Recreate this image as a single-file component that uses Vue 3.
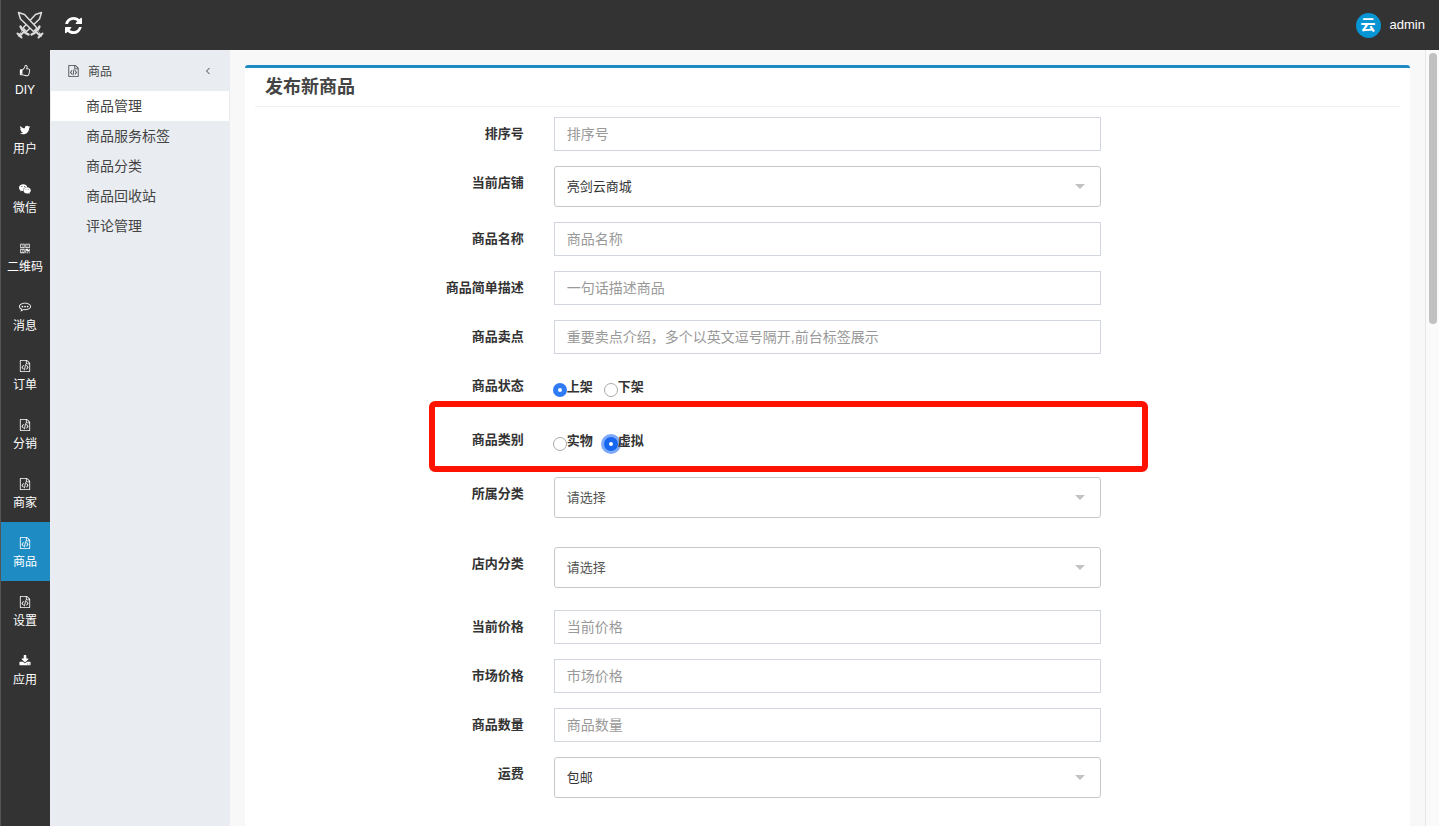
<script setup>
import { ref, reactive } from 'vue'

const icons = {
  thumb: 'M384 1344q0-26-19-45t-45-19-45 19-19 45 19 45 45 19 45-19 19-45zm1152-576q0-51-39-89.5t-89-38.5h-352q0-58 48-159.5t48-160.5q0-98-32-145t-128-47q-26 26-38 85t-30.5 125.5-59.5 109.5q-22 23-77 91-4 5-23 30t-31.5 41-34.5 42.5-40 44-38.5 35.5-40 27-35.5 9h-32v640h32q13 0 31.5 3t33 6.5 38 11 35 11.5 35.5 12.5 29 10.5q211 73 342 73h121q192 0 192-167 0-26-5-56 30-16 47.5-52.5t17.5-73.5-18-69q53-50 53-119 0-25-10-55.5t-25-47.5q32-1 53.5-47t21.5-81zm128-1q0 89-49 163 9 33 9 69 0 77-38 144 3 21 3 43 0 101-60 178 1 139-85 219.5t-227 80.5h-129q-96 0-189.5-22.5t-216.5-65.5q-116-40-138-40h-288q-53 0-90.5-37.5t-37.5-90.5v-640q0-53 37.5-90.5t90.5-37.5h274q36-24 137-155 58-75 107-128 24-25 35.5-85.5t30.5-126.5 62-108q39-37 90-37 84 0 151 32.5t102 101.5 35 186q0 93-48 192h176q104 0 180 76t76 179z',
  twitter: 'M1684 408q-67 98-162 167 1 14 1 42 0 130-38 259.5t-115.5 248.5-184.5 210.5-258 146-323 54.5q-271 0-496-145 35 4 78 4 225 0 401-138-105-2-188-64.5t-114-159.5q33 5 61 5 43 0 85-11-112-23-185.5-111.5t-73.5-205.5v-4q68 38 146 41-66-44-105-115t-39-154q0-88 44-163 121 149 294.5 238.5t371.5 99.5q-8-38-8-74 0-134 94.5-228.5t228.5-94.5q140 0 236 102 109-21 205-78-37 115-142 178 93-10 186-50z',
  wechat: 'M640 190C290 190 0 410 0 700c0 165 92 305 240 400l-60 185 215-115c80 22 150 32 235 32-10-40-16-80-16-120 0-280 250-500 560-500l50 3C1170 350 930 190 640 190zM420 440a80 80 0 1 1 0 160 80 80 0 0 1 0-160zm440 0a80 80 0 1 1 0 160 80 80 0 0 1 0-160zM1220 650c-310 0-550 205-550 455s240 455 550 455c65 0 130-12 190-30l180 95-48-155c130-90 220-215 220-365 0-250-240-455-542-455zm-180 240a65 65 0 1 1 0 130 65 65 0 0 1 0-130zm360 0a65 65 0 1 1 0 130 65 65 0 0 1 0-130z',
  qrcode: 'M192 256h640v640H192zm128 128v384h384V384zM448 512h128v128H448zM960 256h640v640H960zm128 128v384h384V384zM1216 512h128v128h-128zM192 1024h640v640H192zm128 128v384h384v-384zM448 1280h128v128H448zM960 1024h384v128h128v-128h128v384h-384v-128h-128v384H960zM1216 1536h128v128h-128zM1472 1536h128v128h-128z',
  comment: 'M896 256C400 256 0 510 0 832c0 190 140 355 350 458-30 110-90 200-180 280 190-20 370-90 500-218 70 10 150 16 226 16 496 0 896-218 896-536S1392 256 896 256zm0 128c425 0 768 200 768 448s-343 416-768 416c-90 0-180-10-270-25-55 55-115 100-180 130 25-45 45-90 58-145C270 1120 128 985 128 832c0-248 343-448 768-448zM512 704a128 128 0 1 0 0 256 128 128 0 0 0 0-256zm384 0a128 128 0 1 0 0 256 128 128 0 0 0 0-256zm384 0a128 128 0 1 0 0 256 128 128 0 0 0 0-256z',
  file: 'M1596 380q28 28 48 76t20 88v1152q0 40-28 68t-68 28h-1344q-40 0-68-28t-28-68v-1600q0-40 28-68t68-28h896q40 0 88 20t76 48zm-444-244v376h376q-10-29-22-41l-313-313q-12-12-41-22zm384 1528v-1024h-416q-40 0-68-28t-28-68v-416h-768v1536h1280zm-928-896q8-11 21-12.5t24 6.5l51 38q11 8 12.5 21t-6.5 24l-182 243 182 243q8 11 6.5 24t-12.5 21l-51 38q-11 8-24 6.5t-21-12.5l-226-301q-14-19 0-38zm802 301q14 19 0 38l-226 301q-8 11-21 12.5t-24-6.5l-51-38q-11-8-12.5-21t6.5-24l182-243-182-243q-8-11-6.5-24t12.5-21l51-38q11-8 24-6.5t21 12.5zm-620 461q-13-2-20.5-13t-5.5-24l138-831q2-13 13-20.5t24-5.5l63 10q13 2 20.5 13t5.5 24l-138 831q-2 13-13 20.5t-24 5.5z',
  download: 'M1344 1344q0-26-19-45t-45-19-45 19-19 45 19 45 45 19 45-19 19-45zm256 0q0-26-19-45t-45-19-45 19-19 45 19 45 45 19 45-19 19-45zm128-224v320q0 40-28 68t-68 28h-1472q-40 0-68-28t-28-68v-320q0-40 28-68t68-28h465l135 136q58 56 136 56t136-56l136-136h464q40 0 68 28t28 68zm-325-569q17 41-14 70l-448 448q-18 19-45 19t-45-19l-448-448q-31-29-14-70 17-39 59-39h256v-448q0-26 19-45t45-19h256q26 0 45 19t19 45v448h256q42 0 59 39z',
  refresh: 'M1639 1056q0 5-1 7-64 268-268 434.5t-478 166.5q-146 0-282.5-55t-243.5-157l-129 129q-19 19-45 19t-45-19-19-45v-448q0-26 19-45t45-19h448q26 0 45 19t19 45-19 45l-137 137q71 66 161 102t187 36q134 0 250-65t186-179q11-17 53-117 8-23 30-23h192q13 0 22.5 9.5t9.5 22.5zm25-800v448q0 26-19 45t-45 19h-448q-26 0-45-19t-19-45 19-45l138-138q-148-137-349-137-134 0-250 65t-186 179q-11 17-53 117-8 23-30 23h-199q-13 0-22.5-9.5t-9.5-22.5v-7q65-268 270-434.5t480-166.5q146 0 284 55.5t245 156.5l130-129q19-19 45-19t45 19 19 45z'
}

const modules = [
  { label: 'DIY', icon: 'thumb' },
  { label: '用户', icon: 'twitter' },
  { label: '微信', icon: 'wechat' },
  { label: '二维码', icon: 'qrcode' },
  { label: '消息', icon: 'comment' },
  { label: '订单', icon: 'file' },
  { label: '分销', icon: 'file' },
  { label: '商家', icon: 'file' },
  { label: '商品', icon: 'file', active: true },
  { label: '设置', icon: 'file' },
  { label: '应用', icon: 'download' }
]

const menu = ['商品管理', '商品服务标签', '商品分类', '商品回收站', '评论管理']
const current = ref('商品管理')

const fields = [
  { id: 'sort', label: '排序号', type: 'text', hint: '排序号' },
  { id: 'shop', label: '当前店铺', type: 'select', options: ['亮剑云商城'] },
  { id: 'name', label: '商品名称', type: 'text', hint: '商品名称' },
  { id: 'summary', label: '商品简单描述', type: 'text', hint: '一句话描述商品' },
  { id: 'points', label: '商品卖点', type: 'text', hint: '重要卖点介绍，多个以英文逗号隔开,前台标签展示' },
  { id: 'status', label: '商品状态', type: 'radio', options: ['上架', '下架'] },
  { id: 'kind', label: '商品类别', type: 'radio', options: ['实物', '虚拟'], marked: true },
  { id: 'category', label: '所属分类', type: 'select', options: ['请选择'], muted: true, gap: 'wide' },
  { id: 'shopCategory', label: '店内分类', type: 'select', options: ['请选择'], muted: true, gap: 'medium' },
  { id: 'price', label: '当前价格', type: 'text', hint: '当前价格' },
  { id: 'marketPrice', label: '市场价格', type: 'text', hint: '市场价格' },
  { id: 'stock', label: '商品数量', type: 'text', hint: '商品数量' },
  { id: 'freight', label: '运费', type: 'select', options: ['包邮'] }
]

const form = reactive({
  sort: '', shop: '亮剑云商城', name: '', summary: '', points: '',
  status: '上架', kind: '虚拟', category: '请选择', shopCategory: '请选择',
  price: '', marketPrice: '', stock: '', freight: '包邮'
})
</script>

<template>
  <div class="app">
    <header class="topbar">
      <a class="logo" href="#" aria-label="首页">
        <svg viewBox="0 0 28 28" stroke="currentColor" stroke-width="1.5" stroke-linejoin="round" stroke-linecap="round">
          <path fill="#333" d="M25.500 1.500 19.500 3.500 7 17l3.500 3.500L23.500 8z" />
          <path fill="#333" d="M2.500 1.500 8.500 3.500 21 17l-3.500 3.500L4.500 8z" />
          <g fill="none">
            <path d="M4.500 15.500 6 18.500 9.500 22l3 1.500M23.500 15.500 22 18.500 18.500 22l-3 1.500" stroke-width="2.400" />
            <path d="M7.500 20.500 3.500 24.500M20.500 20.500l4 4" stroke-width="3" />
            <path d="m1.500 22.500 4 4M26.500 22.500l-4 4" stroke-width="2" />
          </g>
          <path d="m6.500 20.500-1.500 1.500M21.500 20.500l1.500 1.500" stroke="#555" stroke-width="1" />
        </svg>
      </a>
      <button class="reload" type="button" aria-label="刷新">
        <svg viewBox="128 128 1536 1536"><path :d="icons.refresh" /></svg>
      </button>
      <a class="account" href="#">
        <span class="avatar" aria-hidden="true">云</span>
        <span>admin</span>
      </a>
    </header>

    <div class="body">
      <nav class="rail">
        <a v-for="m in modules" :key="m.label" href="#" class="module" :class="{ active: m.active }">
          <svg :class="m.icon" viewBox="0 0 1792 1792" fill-rule="evenodd"><path :d="icons[m.icon]" /></svg>
          <span>{{ m.label }}</span>
        </a>
      </nav>

      <aside class="side">
        <button class="side-head" type="button">
          <svg class="file" viewBox="0 0 1792 1792"><path :d="icons.file" /></svg>
          <span>商品</span>
          <svg class="chevron" viewBox="0 0 6 8"><path d="M4.500 1 1.500 4l3 3" /></svg>
        </button>
        <a v-for="item in menu" :key="item" href="#" class="side-item" :class="{ active: item === current }" @click.prevent="current = item">{{ item }}</a>
      </aside>

      <main class="content">
        <section class="panel">
          <h1>发布新商品</h1>
          <form>
            <div v-for="f in fields" :key="f.id" class="row" :class="f.gap">
              <label v-if="f.type !== 'radio'" class="caption" :for="f.id">{{ f.label }}</label>
              <span v-else :id="f.id" class="caption">{{ f.label }}</span>
              <div class="control">
                <input v-if="f.type === 'text'" :id="f.id" v-model="form[f.id]" class="text" type="text" :placeholder="f.hint">
                <div v-else-if="f.type === 'select'" class="picker">
                  <select :id="f.id" v-model="form[f.id]" :class="{ muted: f.muted }">
                    <option v-for="o in f.options" :key="o">{{ o }}</option>
                  </select>
                </div>
                <div v-else class="choices" role="radiogroup" :aria-labelledby="f.id">
                  <label v-for="o in f.options" :key="o" class="choice">
                    <input v-model="form[f.id]" type="radio" :name="f.id" :value="o" :class="{ ring: f.marked }">
                    <span>{{ o }}</span>
                  </label>
                </div>
              </div>
              <div v-if="f.marked" class="highlight"></div>
            </div>
          </form>
        </section>
      </main>
      <div class="scroll" aria-hidden="true"><div class="thumb-bar"></div></div>
    </div>
  </div>
</template>

<style>
body {
  margin: 0;
  overflow: hidden;
}
</style>

<style scoped>
.app,
.app * {
  box-sizing: border-box;
}
.app {
  height: 100vh;
  display: flex;
  flex-direction: column;
  font-family: "Liberation Sans", "Noto Sans CJK SC", sans-serif;
  font-size: 13px;
  color: #333;
}
a {
  color: inherit;
  text-decoration: none;
}
button {
  font: inherit;
  color: inherit;
  border: 0;
  background: none;
  padding: 0;
}
svg {
  display: block;
  fill: currentColor;
}
.topbar {
  flex: none;
  display: flex;
  align-items: center;
  height: 50px;
  padding: 0 14px 0 15px;
  border-left: 1px solid #555;
  background: #333;
  color: #fff;
}
.logo svg {
  width: 28px;
  height: 28px;
  color: #ddd;
}
.reload {
  margin-left: 21px;
}
.reload svg {
  width: 17px;
  height: 17px;
}
.account {
  margin-left: auto;
  display: flex;
  align-items: center;
  gap: 9px;
  line-height: 24px;
}
.avatar {
  width: 25px;
  height: 25px;
  border-radius: 50%;
  background: #0795d4;
  text-align: center;
  font-size: 15px;
  font-weight: bold;
}
.body {
  flex: 1;
  min-height: 0;
  display: flex;
}
.rail {
  flex: none;
  width: 50px;
  border-left: 1px solid #555;
  background: #333;
  color: #fff;
}
.module {
  display: flex;
  flex-direction: column;
  align-items: center;
  height: 59px;
  padding: 15px 1px 0 0;
  gap: 5px;
  font-size: 12px;
  line-height: 16px;
  white-space: nowrap;
}
.module svg {
  width: 12px;
  height: 12px;
}
.module svg.wechat {
  width: 14px;
}
.module.active {
  background: #1e8cc3;
}
.side {
  flex: none;
  width: 180px;
  padding: 0 1px;
  background: #e9edf2;
}
.side-head {
  display: flex;
  align-items: center;
  width: 100%;
  height: 41px;
  padding: 0 18px 0 16px;
  gap: 8px;
  font-size: 12px;
  color: #444;
}
.side-head .file {
  width: 13px;
  height: 12px;
}
.side-head .chevron {
  width: 6px;
  height: 8px;
  margin-left: auto;
  fill: none;
  stroke: #444;
}
.side-item {
  display: block;
  padding-left: 35px;
  font-size: 14px;
  line-height: 30px;
  color: #444;
}
.side-item.active {
  background: #fff;
}
.content {
  flex: 1;
  min-width: 0;
  display: flex;
  padding: 15px 15px 0;
  background: #f8f8f8;
  overflow: hidden;
}
.panel {
  flex: 1;
  min-width: 0;
  border-top: 3px solid #1e8cc3;
  border-radius: 3px;
  background: #fff;
}
h1 {
  margin: 0 10px;
  padding-left: 10px;
  border-bottom: 1px solid #f1f1f1;
  font-size: 18px;
  line-height: 38px;
  color: #444;
}
form {
  padding: 10px 5px;
}
.row {
  position: relative;
  display: grid;
  grid-template-columns: 25% 50%;
  margin-bottom: 15px;
}
.row.wide {
  margin-bottom: 29px;
}
.row.medium {
  margin-bottom: 22px;
}
.caption {
  padding: 7px 15px 0;
  text-align: right;
  font-weight: bold;
  line-height: 20px;
}
.control {
  padding: 0 15px;
}
.text,
select {
  display: block;
  width: 100%;
  padding: 0 12px;
  margin: 0;
  font-family: inherit;
  background: #fff;
  outline: 0;
}
.text {
  height: 34px;
  border: 1px solid #d2d6de;
  border-radius: 0;
  font-size: 14px;
}
.text::placeholder {
  color: #999;
}
.picker {
  position: relative;
}
.picker::after {
  content: "";
  position: absolute;
  right: 16px;
  top: 18px;
  border: 5px solid transparent;
  border-top-color: #c2c2c2;
  border-bottom: 0;
  pointer-events: none;
}
select {
  appearance: none;
  height: 41px;
  border: 1px solid #c8c8c8;
  border-radius: 3px;
  font-size: 13px;
  color: #333;
}
select.muted {
  color: #555;
}
.choices {
  display: flex;
  gap: 11px;
  height: 39px;
  margin-left: -1px;
  padding-top: 8px;
}
.choice {
  display: flex;
  height: 20px;
  font-weight: bold;
  line-height: 20px;
}
.choice input {
  appearance: none;
  width: 14px;
  height: 14px;
  margin: 6px 0 0;
  border: 1px solid #aaa;
  border-radius: 50%;
  background: #fff;
}
.choice input:checked {
  border: 5px solid #2f7bf6;
}
.choice input.ring:checked {
  border-color: #1766f0;
  box-shadow: 0 0 0 3px #7ea9f9;
}
.highlight {
  position: absolute;
  left: calc(25% - 110px);
  right: calc(25% - 32px);
  top: -22px;
  bottom: -10px;
  border: 6px solid #ff1200;
  border-radius: 6px;
  pointer-events: none;
}
.scroll {
  flex: none;
  width: 14px;
  padding: 3px 2px 0 3px;
  border-left: 1px solid #e7e7e7;
  background: #fafafa;
}
.thumb-bar {
  height: 35%;
  border-radius: 4px;
  background: #c1c1c1;
}
</style>
